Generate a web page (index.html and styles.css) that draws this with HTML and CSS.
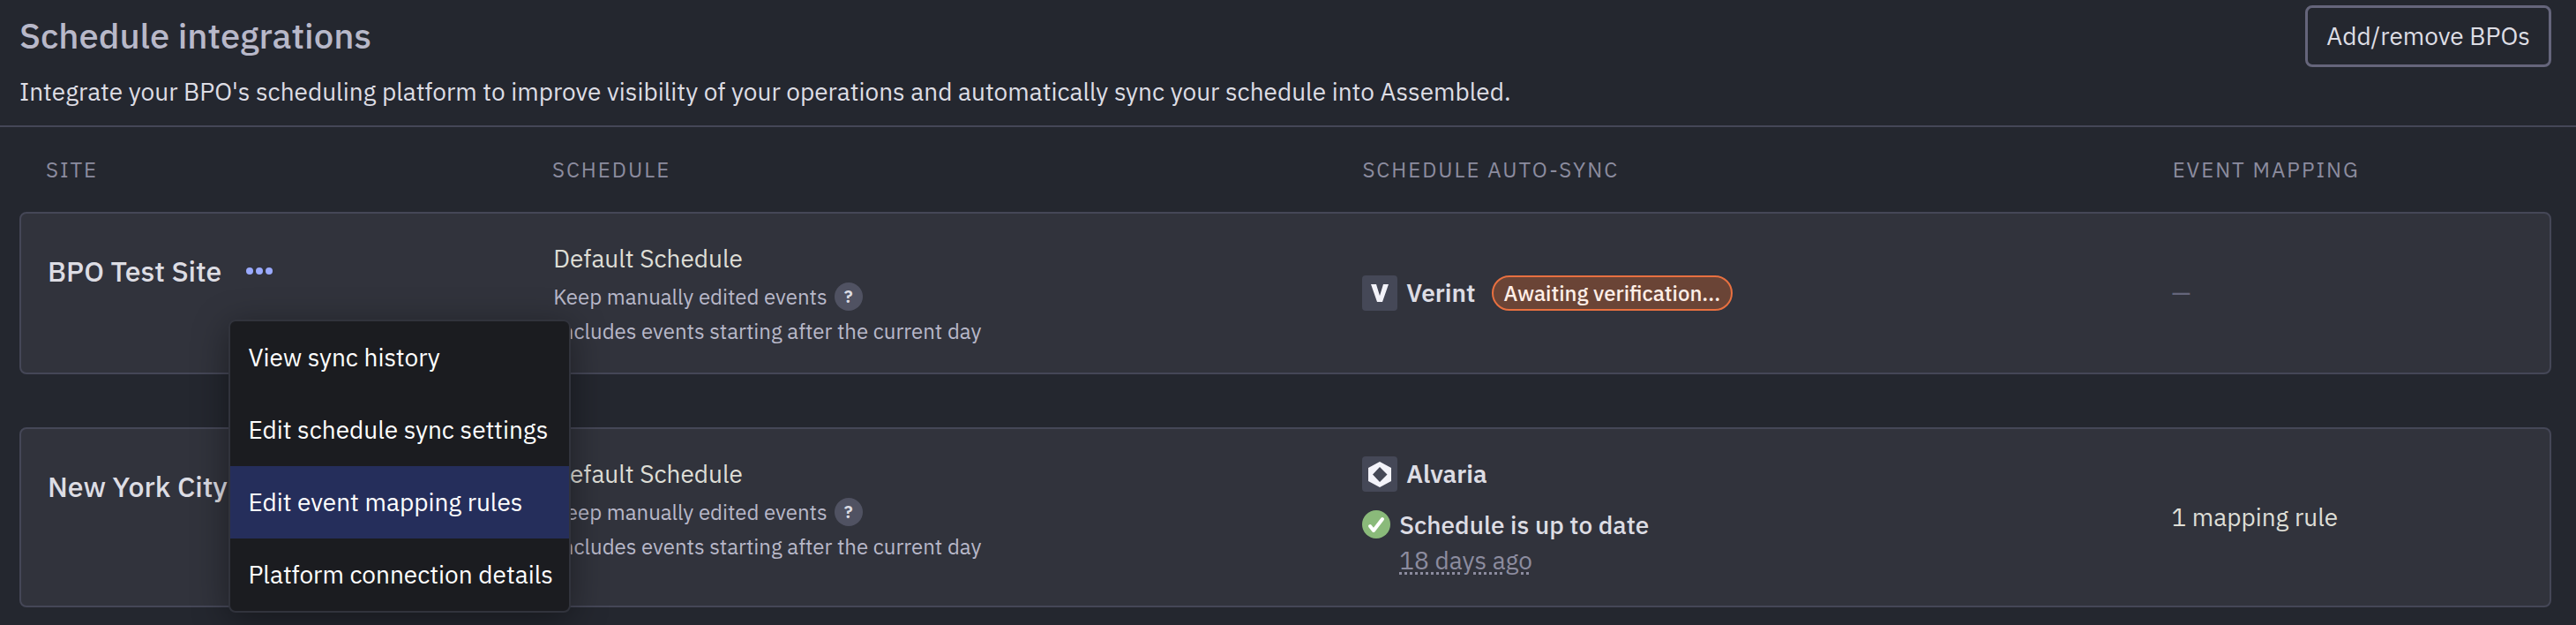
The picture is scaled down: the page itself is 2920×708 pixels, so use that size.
FILE: index.html
```html
<!DOCTYPE html>
<html lang="en">
<head>
  <meta charset="UTF-8" />
  <meta name="viewport" content="width=device-width, initial-scale=1.0"/>
  <title>Schedule integrations</title>
  <link rel="stylesheet" href="styles.css">
</head>
<body>
  <header class="page-header">
    <div class="page-intro">
      <h1>Schedule integrations</h1>
      <p>Integrate your BPO's scheduling platform to improve visibility of your operations and automatically sync your schedule into Assembled.</p>
    </div>
    <button type="button" class="btn-outline">Add/remove BPOs</button>
  </header>

  <main>
    <table class="sites">
      <thead>
        <tr>
          <th scope="col">SITE</th>
          <th scope="col">SCHEDULE</th>
          <th scope="col">SCHEDULE AUTO-SYNC</th>
          <th scope="col">EVENT MAPPING</th>
        </tr>
      </thead>
      <tbody>
        <tr>
          <td class="site">
            <span class="site-name">BPO Test Site</span>
            <div class="site-menu">
              <button type="button" class="dots" aria-label="Site actions" aria-expanded="true">
                <svg width="30" height="8" viewBox="0 0 30 8"><circle cx="4" cy="4" r="4"/><circle cx="15" cy="4" r="4"/><circle cx="26" cy="4" r="4"/></svg>
              </button>
              <div class="menu" role="menu">
                <button type="button" role="menuitem">View sync history</button>
                <button type="button" role="menuitem">Edit schedule sync settings</button>
                <button type="button" role="menuitem" class="active">Edit event mapping rules</button>
                <button type="button" role="menuitem">Platform connection details</button>
              </div>
            </div>
          </td>
          <td class="schedule">
            <div class="schedule-name">Default Schedule</div>
            <div class="schedule-rule">Keep manually edited events <button type="button" class="help" aria-label="Help">?</button></div>
            <div class="schedule-note">Includes events starting after the current day</div>
          </td>
          <td class="sync">
            <div class="platform">
              <svg class="logo" viewBox="0 0 40 40"><path d="M10 10h6l4 13 4-13h6l-7 20h-6z"/></svg>
              <span class="platform-name">Verint</span>
              <span class="pill">Awaiting verification...</span>
            </div>
          </td>
          <td class="mapping empty">—</td>
        </tr>
        <tr>
          <td class="site">
            <span class="site-name">New York City</span>
            <div class="site-menu">
              <button type="button" class="dots" aria-label="Site actions">
                <svg width="30" height="8" viewBox="0 0 30 8"><circle cx="4" cy="4" r="4"/><circle cx="15" cy="4" r="4"/><circle cx="26" cy="4" r="4"/></svg>
              </button>
            </div>
          </td>
          <td class="schedule">
            <div class="schedule-name">Default Schedule</div>
            <div class="schedule-rule">Keep manually edited events <button type="button" class="help" aria-label="Help">?</button></div>
            <div class="schedule-note">Includes events starting after the current day</div>
          </td>
          <td class="sync">
            <div class="platform">
              <svg class="logo" viewBox="0 0 40 40"><path fill-rule="evenodd" d="M20 6l13 7v15l-13 7-13-7V13zM20 12l-8 8.500 8 8.500 8.500-8.500z"/></svg>
              <span class="platform-name">Alvaria</span>
            </div>
            <div class="status">
              <svg class="check" viewBox="0 0 32 32"><circle cx="16" cy="16" r="16"/><path d="M9 18l4 5 10-13"/></svg>
              <div>
                <div class="status-text">Schedule is up to date</div>
                <div class="status-time">18 days ago</div>
              </div>
            </div>
          </td>
          <td class="mapping">1 mapping rule</td>
        </tr>
      </tbody>
    </table>
  </main>
</body>
</html>
```
FILE: styles.css
```css
:root {
  --background: #24272f;
  --card-bg: #31333c;
  --border: #454757;
  --border-strong: #65657b;
  --text: #dddde4;
  --text-warm: #deded6;
  --text-soft: #b8b8c9;
  --text-muted: #8c8c9f;
  --menu-bg: #1b1c20;
  --menu-active: #252e5b;
}

* {
  box-sizing: border-box;
  margin: 0;
  padding: 0;
}

body {
  font-family: "IBM Plex Sans", Roboto, sans-serif;
  font-size: 28px;
  line-height: 40px;
  background: var(--background);
  color: var(--text);
}

button {
  font: inherit;
  color: inherit;
  background: none;
  border: none;
  cursor: pointer;
}

.page-header {
  display: flex;
  justify-content: space-between;
  align-items: flex-start;
  gap: 40px;
  padding: 6px 28px 18px 22px;
  border-bottom: 2px solid var(--border);
}

.page-intro {
  padding-top: 10px;
}

h1 {
  font-size: 40px;
  line-height: 48px;
  font-weight: 500;
  color: var(--text-soft);
  margin-bottom: 20px;
}

.btn-outline {
  padding: 12px 21px;
  border: 3px solid var(--border-strong);
  border-radius: 8px;
  white-space: nowrap;
}

main {
  padding: 0 28px 20px 22px;
}

.sites,
.sites thead,
.sites tbody {
  display: block;
}

.sites tr {
  display: grid;
  grid-template-columns: 20% 32% 32% 16%;
}

.sites th {
  padding: 28px 30px;
  font-size: 24px;
  font-weight: 400;
  letter-spacing: 2px;
  text-align: left;
  color: var(--text-muted);
}

.sites tbody {
  display: grid;
  gap: 60px;
}

.sites tbody tr {
  background: var(--card-bg);
  border: 2px solid var(--border);
  border-radius: 8px;
}

.sites td {
  padding: 30px;
}

.sites .site {
  display: flex;
  align-items: flex-start;
  gap: 8px;
  padding-top: 45px;
}

.site-name {
  font-size: 32px;
  font-weight: 500;
  white-space: nowrap;
}

.site-menu {
  position: relative;
}

.dots {
  display: flex;
  align-items: center;
  height: 40px;
  padding: 0 20px;
}

.dots svg {
  fill: #9aaaff;
}

.menu {
  position: absolute;
  top: 75px;
  left: 0;
  z-index: 10;
  background: var(--menu-bg);
  border: 2px solid var(--card-bg);
  border-radius: 8px;
  box-shadow: 0 8px 40px rgba(0, 0, 0, 0.4);
  overflow: hidden;
}

.menu button {
  display: block;
  width: 100%;
  padding: 21px 18px 21px 20px;
  text-align: left;
  white-space: nowrap;
  color: #ffffff;
}

.menu button:hover,
.menu button.active {
  background: var(--menu-active);
}

.schedule {
  font-size: 24px;
  color: var(--text-soft);
}

.schedule-name {
  font-size: 28px;
  line-height: 42px;
  color: var(--text-warm);
}

.schedule-rule {
  display: flex;
  align-items: center;
  gap: 8px;
  line-height: 44px;
}

.schedule-note {
  line-height: 34px;
}

.help {
  width: 32px;
  height: 32px;
  border-radius: 50%;
  background: #505262;
  color: var(--text);
  font-size: 20px;
  line-height: 32px;
  font-weight: 600;
}

.sites .sync {
  display: flex;
  flex-direction: column;
  justify-content: center;
  gap: 18px;
  padding: 31px 30px;
}

.platform {
  display: flex;
  align-items: center;
  gap: 10px;
}

.logo {
  width: 40px;
  height: 40px;
  border-radius: 4px;
  background: #454857;
  fill: #f3f3fa;
}

.platform-name {
  font-weight: 600;
}

.pill {
  margin-left: 8px;
  padding: 0 12px;
  border: 2px solid #e87040;
  border-radius: 20px;
  background: #6a4436;
  color: #ffeee6;
  font-size: 24px;
  line-height: 36px;
  font-weight: 500;
  white-space: nowrap;
}

.status {
  display: flex;
  gap: 10px;
}

.check {
  width: 32px;
  height: 32px;
  margin-top: 3px;
  fill: #8aba7a;
}

.check path {
  fill: none;
  stroke: #ffffff;
  stroke-width: 4;
  stroke-linecap: round;
  stroke-linejoin: round;
}

.status-text {
  font-weight: 500;
}

.status-time {
  color: var(--text-muted);
  text-decoration: underline dotted 3px;
  text-underline-offset: 3px;
}

.mapping {
  align-self: center;
  color: var(--text-warm);
}

.mapping.empty {
  color: var(--border-strong);
}
```
